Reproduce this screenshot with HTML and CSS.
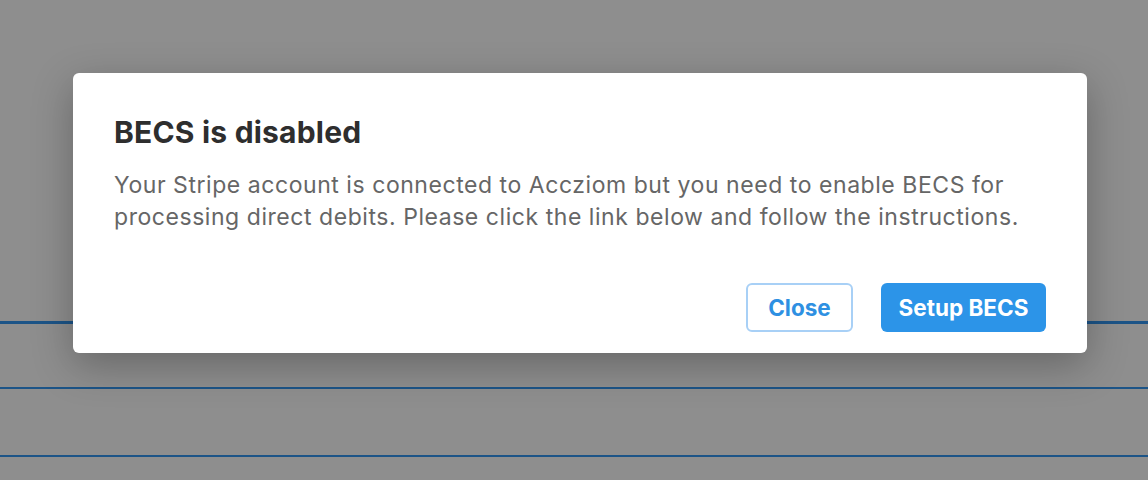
FILE: index.html
```html
<!DOCTYPE html>
<html lang="en">
<head>
<meta charset="utf-8">
<title>BECS is disabled</title>
<link rel="stylesheet" href="styles.css">
</head>
<body>
<div class="page">
  <div class="row row-top"></div>
  <div class="row row-a"></div>
  <div class="row row-b"></div>
  <div class="row row-c"></div>
</div>
<div class="overlay">
  <div class="modal" role="dialog" aria-labelledby="mt">
    <h2 class="modal-title" id="mt">BECS is disabled</h2>
    <p class="modal-text">Your Stripe account is connected to Accziom but you need to enable BECS for processing direct debits. Please click the link below and follow the instructions.</p>
    <div class="modal-actions">
      <button class="btn btn-outline">Close</button>
      <button class="btn btn-primary">Setup BECS</button>
    </div>
  </div>
</div>
</body>
</html>
```
FILE: styles.css
```css
html, body {
  margin: 0;
  padding: 0;
}
body {
  width: 1148px;
  height: 480px;
  overflow: hidden;
  background: #8e8e8e;
  font-family: Inter, "Noto Sans", sans-serif;
  position: relative;
}
.page {
  display: flex;
  flex-direction: column;
}
.row-top {
  height: 321px;
}
.row-a {
  height: 63px;
  border-top: 3px solid #1c5487;
}
.row-b {
  height: 66px;
  border-top: 2px solid #1c5487;
}
.row-c {
  height: 20px;
  border-top: 2px solid #1c5487;
}
.overlay {
  position: absolute;
  inset: 0;
}
.modal {
  position: absolute;
  left: 73px;
  top: 73px;
  width: 1014px;
  height: 280px;
  box-sizing: border-box;
  background: #fff;
  border-radius: 6px;
  padding: 41px 41px 21px 41px;
  box-shadow: 0 12px 40px rgba(0, 0, 0, 0.28);
  display: flex;
  flex-direction: column;
}
.modal-title {
  margin: 0;
  font-size: 30px;
  line-height: 36px;
  font-weight: 700;
  color: #2e2e2e;
  letter-spacing: 0.2px;
}
.modal-text {
  margin: 19px 0 0 0;
  font-size: 23px;
  line-height: 32px;
  color: #666666;
  letter-spacing: 0.55px;
}
.modal-actions {
  margin-top: auto;
  display: flex;
  justify-content: flex-end;
  gap: 28px;
}
.btn {
  font-family: inherit;
  font-size: 22.5px;
  font-weight: 700;
  height: 49px;
  border-radius: 6px;
  box-sizing: border-box;
  cursor: pointer;
  padding: 0;
}
.btn-outline {
  width: 107px;
  background: #fff;
  color: #2e90e2;
  border: 2px solid #a8d0f6;
}
.btn-primary {
  width: 165px;
  background: #2c94e8;
  color: #fff;
  border: none;
}
```
